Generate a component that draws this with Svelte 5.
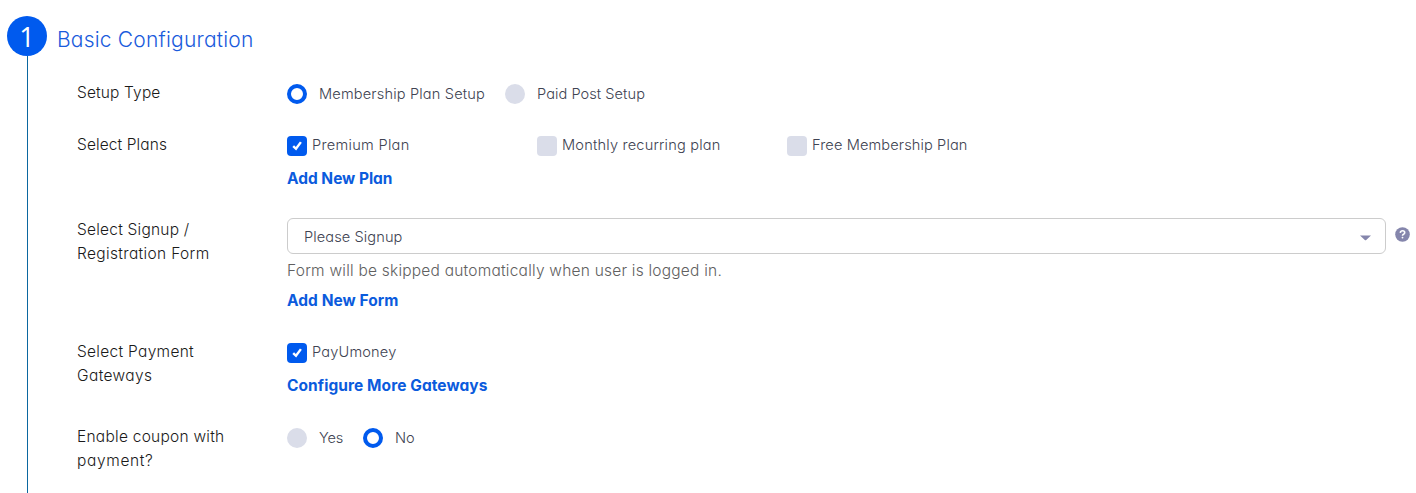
<script>
  const plans = [
    { name: 'Premium Plan', width: 97.5, checked: true },
    { name: 'Monthly recurring plan', width: 158.5, checked: false },
    { name: 'Free Membership Plan', width: 155.5, checked: false }
  ];
  const setupTypes = [
    { name: 'Membership Plan Setup', width: 166, selected: true },
    { name: 'Paid Post Setup', width: 108, selected: false }
  ];
  const couponChoices = [
    { name: 'Yes', width: 24, selected: false },
    { name: 'No', width: 19.5, selected: true }
  ];

  // Tracks a line of text so that it spans the given width.
  function fit(node, width) {
    const natural = node.getBoundingClientRect().width;
    node.style.letterSpacing = `${(width - natural) / node.textContent.length}px`;
  }
</script>

{#snippet line(text, width)}<span class="line" use:fit={width}>{text}</span>{/snippet}

{#snippet checkbox(name, width, checked)}
  <div class="check">
    <span class="box" class:on={checked}>
      {#if checked}
        <svg viewBox="0 0 20 20" width="20" height="20"><path d="M6.2 10.1 9 12.8 13.9 6.1" /></svg>
      {/if}
    </span>
    {@render line(name, width)}
  </div>
{/snippet}

{#snippet radios(choices)}
  <div class="radios">
    {#each choices as c}
      <div class="radio">
        <span class="dot" class:on={c.selected}></span>
        {@render line(c.name, c.width)}
      </div>
    {/each}
  </div>
{/snippet}

<section class="step">
  <div class="rail">
    <div class="number">1</div>
    <div class="track"></div>
  </div>
  <div class="body">
    <h2>{@render line('Basic Configuration', 196.5)}</h2>

    <div class="row">
      <div class="label">{@render line('Setup Type', 83.5)}</div>
      <div class="field">{@render radios(setupTypes)}</div>
    </div>

    <div class="row">
      <div class="label">{@render line('Select Plans', 90)}</div>
      <div class="field">
        <div class="checks">
          {#each plans as p}{@render checkbox(p.name, p.width, p.checked)}{/each}
        </div>
        <div class="link">{@render line('Add New Plan', 105.5)}</div>
      </div>
    </div>

    <div class="row form">
      <div class="label">
        {@render line('Select Signup /', 112.5)}
        {@render line('Registration Form', 132.5)}
      </div>
      <div class="field">
        <div class="selectrow">
          <div class="select">
            {@render line('Please Signup', 98.5)}
            <svg class="caret" width="11" height="6" viewBox="0 0 11 6"><path d="M0 .5h11L6.2 5Q5.5 5.7 4.8 5Z" /></svg>
          </div>
          <svg class="help" width="15" height="15" viewBox="0 0 15 15">
            <circle cx="7.5" cy="7.5" r="7.3" />
            <path d="M5.3 5.8Q5.5 3.8 7.6 3.8T9.7 5.7Q9.7 6.7 8.5 7.3 7.5 7.8 7.5 8.7" />
            <rect x="6.6" y="9.8" width="1.8" height="1.7" rx=".8" />
          </svg>
        </div>
        <div class="hint">{@render line('Form will be skipped automatically when user is logged in.', 435)}</div>
        <div class="link">{@render line('Add New Form', 111.5)}</div>
      </div>
    </div>

    <div class="row">
      <div class="label">
        {@render line('Select Payment', 117)}
        {@render line('Gateways', 75.5)}
      </div>
      <div class="field">
        <div class="checks">{@render checkbox('PayUmoney', 84.5, true)}</div>
        <div class="link">{@render line('Configure More Gateways', 200.5)}</div>
      </div>
    </div>

    <div class="row">
      <div class="label">
        {@render line('Enable coupon with', 147.5)}
        {@render line('payment?', 76.5)}
      </div>
      <div class="field">{@render radios(couponChoices)}</div>
    </div>
  </div>
</section>

<style>
  :global(body) {
    background: #fff;
    overflow: hidden;
  }
  .step {
    display: flex;
    box-sizing: border-box;
    height: 493px;
    padding: 16px 6px 0 7px;
    overflow: hidden;
    font-family: Inter, 'Open Sans', sans-serif;
    font-feature-settings: 'cv11';
    font-size: 15.5px;
    font-weight: 300;
    line-height: 24px;
    color: #1a1a1a;
  }
  .line {
    display: inline-block;
    white-space: nowrap;
  }
  .rail {
    display: flex;
    flex: none;
    flex-direction: column;
    align-items: center;
    width: 40px;
  }
  .number {
    flex: none;
    box-sizing: border-box;
    width: 40px;
    height: 40px;
    padding-top: 1px;
    border-radius: 50%;
    background: #005aee;
    color: #fff;
    font-family: 'Open Sans', sans-serif;
    font-size: 27px;
    font-weight: 400;
    line-height: 40px;
    text-align: center;
  }
  .track {
    flex: 1;
    width: 1px;
    margin-left: 1px;
    background: #0b67a0;
  }
  .body {
    flex: 1;
    min-width: 0;
    padding-left: 10px;
  }
  h2 {
    margin: 0;
    padding: 9px 0 26px;
    font-size: 21px;
    font-weight: 350;
    line-height: 30px;
    color: #1a5bdc;
  }
  .row {
    display: flex;
    padding: 0 0 28px 20px;
  }
  .form {
    padding-bottom: 27px;
  }
  .label {
    display: flex;
    flex: none;
    flex-direction: column;
    align-items: flex-start;
    width: 210px;
  }
  .field {
    flex: 1;
    min-width: 0;
  }
  .radios {
    display: flex;
    gap: 20px;
    box-sizing: border-box;
    height: 24px;
    padding-top: 1px;
    font-size: 14.6px;
    color: #404352;
  }
  .radio {
    display: flex;
    gap: 12px;
  }
  .dot,
  .box {
    flex: none;
    box-sizing: border-box;
    width: 20px;
    height: 20px;
    background: #dadde9;
  }
  .dot {
    margin-top: 2px;
    border-radius: 50%;
  }
  .dot.on {
    border: 4px solid #005aee;
    background: #fff;
  }
  .checks {
    display: flex;
    height: 24px;
    font-size: 14.6px;
    color: #404352;
  }
  .check {
    display: flex;
    gap: 5px;
    width: 250px;
  }
  .box {
    margin-top: 3px;
    border-radius: 4px;
  }
  .box.on {
    background: #005aee;
  }
  .box svg {
    display: block;
    fill: none;
    stroke: #fff;
    stroke-width: 2.4;
  }
  .link {
    font-weight: 700;
    color: #0b5bdd;
  }
  .checks + .link {
    height: 23px;
    padding-top: 10px;
  }
  .hint {
    padding: 5px 0 6px;
    color: #606060;
  }
  .selectrow {
    display: flex;
    gap: 9px;
  }
  .select {
    display: flex;
    flex: none;
    align-items: center;
    justify-content: space-between;
    box-sizing: border-box;
    width: 1099px;
    height: 36px;
    padding: 2px 14px 0 16px;
    border: 1px solid #ccc;
    border-radius: 6px;
    font-size: 14.6px;
    color: #404352;
  }
  .caret {
    margin-top: 1px;
    fill: #8586ac;
  }
  .help {
    margin-top: 9px;
    fill: #8586ac;
  }
  .help path {
    fill: none;
    stroke: #fff;
    stroke-width: 1.6;
  }
  .help rect {
    fill: #fff;
  }
</style>
